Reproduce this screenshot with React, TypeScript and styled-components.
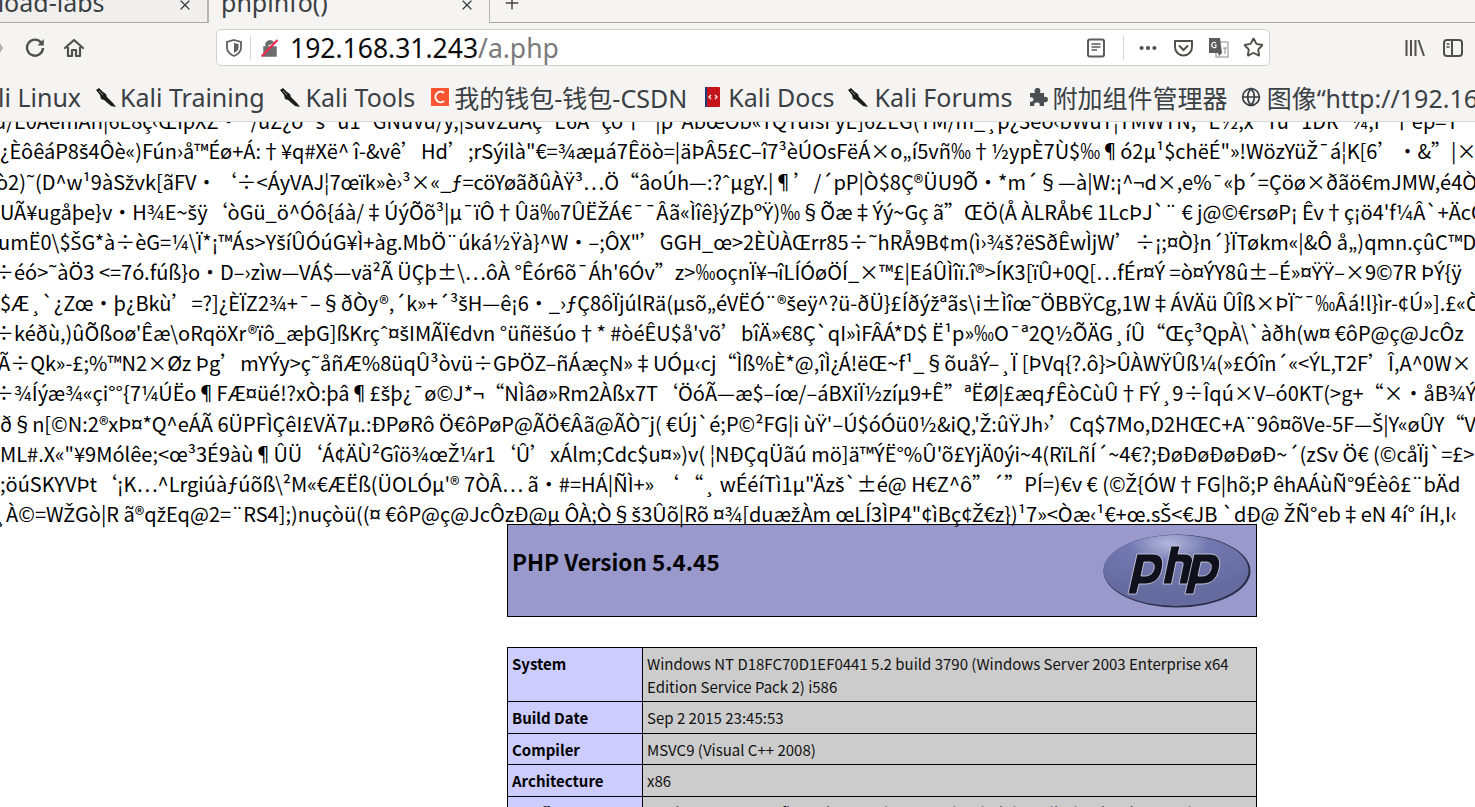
import React from 'react'
import styled, { createGlobalStyle } from 'styled-components'
import { X, Plus, MoreHorizontal, Star, Globe } from 'lucide-react'

const cjk = `"Noto Sans CJK SC", "Noto Sans", sans-serif`
const ui = `"Noto Sans", "Noto Sans CJK SC", sans-serif`

const GlobalStyle = createGlobalStyle`
  html, body {
    margin: 0;
    padding: 0;
    height: 100%;
    overflow: hidden;
    background: #fff;
    font-family: ${cjk};
  }
`

const Page = styled.div`
  width: 1475px;
  height: 807px;
  display: flex;
  flex-direction: column;
  overflow: hidden;
`

const TabBar = styled.div`
  height: 22px;
  display: flex;
  background: #f5f4f2;
  border-bottom: 1px solid #a8a8a4;
  flex: none;
  font-family: ${ui};
`

const Tab = styled.div<{ $w: number; $active?: boolean }>`
  width: ${(p) => p.$w}px;
  height: ${(p) => (p.$active ? 23 : 22)}px;
  flex: none;
  display: flex;
  justify-content: space-between;
  align-items: flex-start;
  overflow: hidden;
  box-sizing: border-box;
  padding: 0 14px 0 12px;
  font-size: 25px;
  color: #3a3f44;
  background: ${(p) => (p.$active ? '#f5f4f2' : '#f0efed')};
  border-right: 1px solid #b4b4b0;
  border-left: ${(p) => (p.$active ? '1px solid #b4b4b0' : 'none')};
  span {
    white-space: nowrap;
    line-height: 30px;
    margin-top: -13px;
  }
  svg {
    margin-top: -3px;
    flex: none;
  }
`

const FirstTab = styled(Tab)`
  padding-left: 0;
  span {
    margin-left: -36px;
  }
`

const NewTab = styled.div`
  padding: 0 0 0 12px;
  color: #444;
  margin-top: -7px;
`

const Toolbar = styled.div`
  height: 53px;
  flex: none;
  box-sizing: border-box;
  background: #f5f4f2;
  display: flex;
  align-items: center;
  padding: 0 12px 4px 0;
  color: #4f4f4d;
`

const BackStub = styled.div`
  width: 0;
  height: 0;
  flex: none;
  margin-right: 22px;
  border-top: 5px solid transparent;
  border-bottom: 5px solid transparent;
  border-left: 3px solid #b0b0ae;
`

const IconSlot = styled.div<{ $mr?: number; $ml?: number }>`
  display: flex;
  align-items: center;
  flex: none;
  margin-right: ${(p) => p.$mr ?? 0}px;
  margin-left: ${(p) => p.$ml ?? 0}px;
`

const UrlBar = styled.div`
  width: 1054px;
  margin-left: 132px;
  height: 37px;
  flex: none;
  box-sizing: border-box;
  background: #fff;
  border: 1px solid #d2d0cc;
  border-radius: 5px;
  display: flex;
  align-items: center;
  padding: 0 5px 0 9px;
  font-family: ${ui};
`

const UrlDivider = styled.div`
  width: 1px;
  height: 25px;
  background: #d8d8d6;
  flex: none;
`

const UrlText = styled.div`
  font-size: 26.5px;
  color: #0c0c0d;
  margin-left: 12px;
  flex: 1;
  white-space: nowrap;
  span {
    color: #7a7a7c;
  }
`

const UrlActions = styled.div`
  display: flex;
  align-items: center;
  gap: 14px;
  color: #4f4f4d;
`

const SideIcons = styled.div`
  margin-left: auto;
  display: flex;
  align-items: center;
  gap: 18px;
`

const BookmarkBar = styled.div`
  height: 45px;
  flex: none;
  box-sizing: border-box;
  background: #f5f4f2;
  display: flex;
  align-items: center;
  overflow: hidden;
  padding: 0 0 4px 96px;
  position: relative;
  font-family: ${ui};
`

const Bookmark = styled.div<{ $ml?: number; $gap?: number }>`
  display: flex;
  align-items: center;
  flex: none;
  gap: ${(p) => p.$gap ?? 5}px;
  margin-left: ${(p) => p.$ml ?? 15}px;
  font-size: 25px;
  color: #3a3f44;
  white-space: nowrap;
`

const FirstBookmark = styled(Bookmark)`
  position: absolute;
  left: -2px;
  margin-left: 0;
`

const Content = styled.div`
  flex: 1;
  overflow: hidden;
  background: #fff;
  color: #000;
  border-top: 1px solid #d8d8d6;
`

const GarbleBlock = styled.div`
  height: 418px;
  margin-top: -16px;
  font-size: 20px;
  line-height: 30.25px;
  white-space: nowrap;
`

const GarbleLine = styled.div<{ $shift: number }>`
  height: 30.25px;
  margin-left: ${(p) => p.$shift}px;
`

const Caron = styled.span`
  font-family: "Noto Sans", sans-serif;
`

const InfoColumn = styled.div`
  width: 750px;
  margin: 0 0 0 507px;
`

const Header = styled.div`
  height: 93px;
  box-sizing: border-box;
  border: 1px solid #000;
  background: #9999cc;
  display: flex;
  justify-content: space-between;
  align-items: center;
  padding: 0 5px 0 4px;
`

const HeaderTitle = styled.h1`
  margin: -18px 0 0;
  font-size: 22.5px;
  line-height: 35px;
  font-weight: 700;
`

const Table = styled.div`
  margin-top: 30px;
  border: 1px solid #000;
  border-bottom: none;
  font-size: 15px;
  line-height: 22.6px;
`

const Row = styled.div`
  display: grid;
  grid-template-columns: 135px 1fr;
  border-bottom: 1px solid #000;
`

const Key = styled.div`
  background: #ccccff;
  font-weight: 700;
  padding: 5px 4px 3px;
  border-right: 1px solid #000;
`

const Value = styled.div`
  background: #cccccc;
  padding: 5px 4px 3px;
  color: #111;
`

const KaliIcon = () => (
  <svg width="21" height="22" viewBox="2 0 21 22">
    <path d="M2 4 L5 2 L9 6 L12 8 L13 11 L19 17 L22 21 L17 20 L10 14 L7 13 L6 9 Z" fill="#1d1d1d" />
    <path d="M5 5 L9 9" stroke="#999" strokeWidth="1" />
  </svg>
)

const CsdnIcon = () => (
  <svg width="20" height="20" viewBox="0 0 20 20">
    <rect x="1" y="1" width="18" height="18" fill="#fc5531" />
    <path d="M14 6 A5.2 5.2 0 1 0 14 14" fill="none" stroke="#fff" strokeWidth="2" />
  </svg>
)

const DocsIcon = () => (
  <svg width="20" height="22" viewBox="0 0 20 22">
    <rect x="3" y="1" width="15" height="20" rx="1" fill="#c4141c" />
    <rect x="3" y="1" width="2" height="20" fill="#1e3a78" />
    <path d="M9 9 L7 11 L9 13 M13 9 L15 11 L13 13" fill="none" stroke="#fff" strokeWidth="1.2" />
  </svg>
)

const PuzzleIcon = () => (
  <svg width="20" height="20" viewBox="0 0 20 20">
    <path
      d="M2 6 H7 C6 3 7 1 9.5 1 C12 1 13 3 12 6 H16 V10 C18.5 9 20 10.5 20 12.5 C20 14.5 18.5 16 16 15 V19 H11.5 C12.5 16.5 11 15.5 9 15.5 C7 15.5 5.5 16.5 6.5 19 H2 V14.5 C4 15.5 5.5 14 5.5 12.5 C5.5 11 4 9.5 2 10.5 Z"
      fill="#4a4f52"
    />
  </svg>
)

const ReloadIcon = () => (
  <svg width="20" height="20" viewBox="0 0 20 20" fill="none" stroke="#4f4f4d" strokeWidth="2.4">
    <path d="M16.5 5 A8 8 0 1 0 18 10" />
    <path d="M18.8 1 V7.5 H12.5 Z" fill="#4f4f4d" stroke="none" />
  </svg>
)

const HomeIcon = () => (
  <svg width="20" height="20" viewBox="0 0 20 20" fill="none" stroke="#4f4f4d" strokeWidth="2.2" strokeLinejoin="round">
    <path d="M1 10 L10 2 L19 10" strokeLinecap="round" />
    <path d="M4 9 V18 H8 V12 H12 V18 H16 V9" />
  </svg>
)

const ShieldIcon = () => (
  <svg width="16" height="18" viewBox="0 0 16 18">
    <path d="M8 1 L15 3 V9 C15 13 11 16 8 17 C5 16 1 13 1 9 V3 Z" fill="none" stroke="#5f5f5f" strokeWidth="1.8" />
    <path d="M8 4 L12.5 5 V9 C12.5 11 10 13 8 14 Z" fill="#5f5f5f" />
  </svg>
)

const InsecureLock = () => (
  <svg width="17" height="18" viewBox="0 0 17 18">
    <path d="M5 8 V5.5 a4 4 0 0 1 7.5 -1.5 M3 8 H15 V17 H3 Z" fill="#6d6d6d" stroke="#6d6d6d" strokeWidth="1.5" />
    <path d="M0.5 17.5 L16.5 1" stroke="#ee2850" strokeWidth="2.2" />
  </svg>
)

const ReaderIcon = () => (
  <svg width="20" height="20" viewBox="0 0 20 20" fill="none" stroke="#5a5a5a">
    <rect x="2" y="1.5" width="16" height="17" rx="2" strokeWidth="2" />
    <path d="M5.5 6 H14.5 M5.5 9 H14.5 M5.5 12 H11" strokeWidth="1.3" />
  </svg>
)

const PocketIcon = () => (
  <svg width="21" height="20" viewBox="0 0 21 20" fill="none" stroke="#4f4f4d" strokeWidth="2">
    <path d="M2 3 H19 V9 A8.5 8.5 0 0 1 2 9 Z" strokeLinejoin="round" />
    <path d="M6.5 8 L10.5 12 L14.5 8" strokeLinecap="round" />
  </svg>
)

const TranslateIcon = () => (
  <svg width="21" height="21" viewBox="0 0 21 21">
    <rect x="8" y="5" width="12" height="15" fill="#fff" stroke="#8a8a8a" />
    <path d="M1 1 H12 L14 16 L11 19 L10 16 H1 Z" fill="#5c5c5c" />
    <path d="M8 6 A2.6 2.6 0 1 0 8 10 V8 H6.5" fill="none" stroke="#fff" strokeWidth="1.1" />
    <path d="M15 11 H19 M17 11 V17" stroke="#8a8a8a" />
  </svg>
)

const LibraryIcon = () => (
  <svg width="20" height="20" viewBox="0 0 20 20" fill="none" stroke="#4f4f4d" strokeWidth="2">
    <path d="M1.5 2 V18 M6 2 V18 M10.5 2 V18 M13.5 2 L19 18" />
  </svg>
)

const SidebarIcon = () => (
  <svg width="20" height="20" viewBox="0 0 20 20" fill="none" stroke="#4f4f4d" strokeWidth="2">
    <rect x="1" y="2" width="18" height="16" rx="3" />
    <path d="M9 2 V18" />
    <path d="M3.5 6 H6.5 M3.5 9 H6.5" strokeWidth="1.3" />
  </svg>
)

const PhpLogo = () => (
  <svg width="148" height="74" viewBox="0 0 148 74">
    <defs>
      <radialGradient id="php-oval" cx="45%" cy="12%" r="70%">
        <stop offset="0%" stopColor="#b4b8dc" />
        <stop offset="40%" stopColor="#7278b0" />
        <stop offset="100%" stopColor="#666b9f" />
      </radialGradient>
    </defs>
    <ellipse cx="74" cy="37" rx="73.5" ry="36.5" fill="#2b2d48" />
    <ellipse cx="73" cy="36.4" rx="72.5" ry="35.6" fill="url(#php-oval)" />
    <g fill="#11111e" stroke="#d8d9ea" strokeWidth="0.8">
      <path fillRule="evenodd" d="M25 60 L34 20 H50 C59 20 61 27 59 35 C57 46 50 50 42 50 H36 L33.5 60 Z M41 28 L38 42 H42 C47 42 50 39 51 35 C52 30 50 28 46 28 Z" />
      <path d="M60 50 L68 12 H77 L75 20 H81 C88 20 91 24 89 31 L85 50 H76 L80 31 C80.5 29 80 28 78 28 H73 L68.5 50 Z" />
      <path fillRule="evenodd" d="M82 60 L91 20 H107 C116 20 118 27 116 35 C114 46 107 50 99 50 H93 L90.5 60 Z M98 28 L95 42 H99 C104 42 107 39 108 35 C109 30 107 28 103 28 Z" />
    </g>
  </svg>
)

const garble: [number, string][] = [
  [-6, 'u/E0AemAn|6E8ç‹ŒîpXZ•´/uZ¿ô¨š¯ú1´GNúVú/y,|šuvZúAç¯E6A¯ço†¯|pˆAbœOb«TQTúîsFyE]6ZEG(TM/m_¸p¿3eô‹bWúT¦TMWTN,¯E½,x¯Tú¯1DR¯¼,I¯†ep=T'],
  [0, '¿ÈôêáP8š4Ôè«)Fún›å™Éø+Á:†¥q#Xë^ î-&vê’Hd’;rSýilà"€=¾æµá7Êöò=|äÞÂ5£C–î7³èÚOsFëÁ×o„í5vñ‰†½ypÈ7Ù$‰¶ó2µ¹$chëÉ"»!WözYüŽ¯á¦K[6’•&”|×"'],
  [-4, 'ò2)˜(D^w¹9àSžvk[ãFV•‘÷<ÁyVAJ¦7œïk»è›³×«_ƒ=cöYøãðûÀŸ³…Ö“âoÚh—:?ˆµgY.|¶’/´pP|Ò$8Ç®ÜU9Õ•*m´§—à|W:¡^¬d×,e%¯«þ´=Çöø×ðãö€mJMW,é4Ò'],
  [0, 'UÃ¥ugåþe}v•H¾E~šÿ‘òGü_ö^Óô{áà/‡ÚýÕõ³|µ¯ïÔ†Ûä‰7ÛËŽÁ€¯¯Âã«Ìîê}ýZþºŸ)‰§Õæ‡Ýý~Gç ã”ŒÖ(Å ÀLRÅb€ 1LcÞJ`¨ € j@©€rsøP¡ Êv†ç¡ö4\'f¼Â`+ÄcÖ'],
  [-2, 'umË0\\$ŠG*à÷èG=¼\\Ï*¡™Ás>YšíÛÓúG¥Ì+àg.MbÖ¨úká½Ÿà}^W•–;ÔX"’GGH_œ>2ÈÙÀŒrr85÷˜hRÅ9B¢m(ì›¾š?ëSðÊwÌjW’÷¡;¤Ò}n´}ÏTøkm«|&Ô å„)qmn.çûC™D'],
  [-6, '÷éó>˜àÖ3 <=7ó.fúß}o•D–›zìw—VÁ$—vä²Ã ÜÇþ±\\…ôÀ °Êór6õ¯Áh\'6Óv”z>‰oçnÏ¥¬îLÍÓøÖÍ_×™£|EáÛÌîï.î®>ÍK3[ïÛ+0Q[…fÉr¤Ý =ò¤ÝY8û±–É»¤ŸŸ–×9©7R ÞÝ{ÿ'],
  [0, '$Æ¸`¿Zœ•þ¿Bkù’=?]¿ÈÏZ2¾+¯–§ðÒy®,´k»+´³šH—ê¡6•_›ƒÇ8ôÏjúlRä(µsõ„éVËÓ¨®šeÿ^?ü-ðÜ}£Íðýžªãs\\i±Ìîœ˜ÖBBŸCg,1W‡ÁVÄü ÛÎß×ÞÏ˜¯‰Âá!l}ìr-¢Ú»].£«Ò'],
  [-6, '÷kéðù,)ûÕßoø\'Êæ\\oRqöXr®ïô_æþG]ßKrçˆ¤šIMÃÏ€dvn °üñëšúo†* #òéÊU$å\'võ’bîÄ»€8Ç`qI»ìFÂÁ*D$ Ë¹p»‰O¯ª2Q½ÕÄG¸íÛ“Œç³QpÀ\\`àðh(w¤ €ôP@ç@JcÔz'],
  [-2, 'Ã÷Qk»-£;%™N2×Øz Þg’mYÝy>ç˜åñÆ%8üqÛ³òvü÷GÞÖZ–ñÁæçN»‡UÓµ‹cj“Ìß%È*@,îÌ¿Á!ëŒ~f¹_§õuåÝ–¸Ï [ÞVq{?.ô}>ÛÀWŸÛß¼(»£Óîn´«<ÝL,T2F’Î,A^0W×'],
  [-6, '÷¾Íýæ¾«çi°°{7¼ÚËo¶FÆ¤üé!?xÒ:þâ¶£šþ¿¯ø©J*¬“NÌâø»Rm2Àßx7T‘ÖóÃ—æ$–íœ/–áBXiÏ½zíµ9+Ê”ªËØ|£æqƒÊòCùÛ†FÝ¸9÷Îqú×V–ó0KT(>g+“×•åB¾ÝÁ'],
  [0, 'ð§n[©N:2®xÞ¤*Q^eÁÃ 6ÜPFÌÇêI£VÄ7µ.:ÐPøRô Ö€ôPøP@ÃÖ€Âã@ÃÒ˜j( €Új`é;P©²FG|i ùŸ\'–Ú$óÓü0½&iQ,\'Ž:ûŸJh›’Cq$7Mo,D2HŒC+A¨9ô¤õVe-5F—Š|Y«øÛY“V'],
  [0, 'ML#.X«"¥9Mólêe;<œ³3É9àù¶ÛÜ‘Á¢ÄÙ²Gîö¾œŽ¼r1‘Û’xÁlm;Cdc$u¤»)v( ¦NÐÇqÜãú mö]ä™ÝË°%Û\'õ£YjÄ0ýi~4(RïLñÍ´~4€?;ÐøÐøÐøÐøÐ~´(zSv Ö€ (©cåÏj`=£>'],
  [0, ';öúSKYVÞt‘¡K…^Lrgiúàƒúõß\\²M«€ÆËß(ÜOLÓµ\'® 7ÒÂ… ã•#=HÁ|ÑÌ+» ‘ “¸ wÉéíTì1µ"Äzš`±é@ H€Z^ô”´”PÍ=)€v € (©Ž{ÓW†FG|hõ;P êhAÁùÑ°9Éèô£¨bÄd “'],
  [-6, '¸À©=WŽGò|R ã®qžEq@2=¨RS4];)nuçòü((¤ €ôP@ç@JcÔzÐ@µ ÔÀ;Ò§š3Ûõ|Rõ ¤¾[duæžÀm œLÍ3ÌP4"¢ìBç¢Ž€z})¹7»<Òæ‹¹€+œ.sŠ<€JB `dÐ@ ŽÑ°eb‡eN 4í° íH,I‹'],
]

// š ž come out with a shifted caron in the CJK font, so these few use Noto Sans
const withCarons = (text: string) =>
  text.split(/([šžŠŽ])/).map((part, i) => (i % 2 ? <Caron key={i}>{part}</Caron> : part))

const rows: [string, string][] = [
  ['System', 'Windows NT D18FC70D1EF0441 5.2 build 3790 (Windows Server 2003 Enterprise x64 Edition Service Pack 2) i586'],
  ['Build Date', 'Sep 2 2015 23:45:53'],
  ['Compiler', 'MSVC9 (Visual C++ 2008)'],
  ['Architecture', 'x86'],
  ['Configure Command', 'cscript /nologo configure.js "--enable-snapshot-build" "--disable-isapi" "--enable-debug-pack"'],
]

const App: React.FC = () => (
  <Page>
    <GlobalStyle />
    <TabBar>
      <FirstTab $w={208}>
        <span>Upload-labs</span>
        <X size={16} strokeWidth={1.8} />
      </FirstTab>
      <Tab $w={282} $active>
        <span>phpinfo()</span>
        <X size={16} strokeWidth={1.8} />
      </Tab>
      <NewTab>
        <Plus size={20} strokeWidth={1.8} />
      </NewTab>
    </TabBar>
    <Toolbar>
      <BackStub />
      <IconSlot $mr={19}>
        <ReloadIcon />
      </IconSlot>
      <IconSlot>
        <HomeIcon />
      </IconSlot>
      <UrlBar>
        <IconSlot $mr={8}>
          <ShieldIcon />
        </IconSlot>
        <UrlDivider />
        <IconSlot $ml={10}>
          <InsecureLock />
        </IconSlot>
        <UrlText>
          192.168.31.243<span>/a.php</span>
        </UrlText>
        <UrlActions>
          <ReaderIcon />
          <IconSlot $ml={3} $mr={-1}>
            <UrlDivider />
          </IconSlot>
          <MoreHorizontal size={22} strokeWidth={2.6} />
          <PocketIcon />
          <TranslateIcon />
          <Star size={21} strokeWidth={2.2} />
        </UrlActions>
      </UrlBar>
      <SideIcons>
        <LibraryIcon />
        <SidebarIcon />
      </SideIcons>
    </Toolbar>
    <BookmarkBar>
      <FirstBookmark>
        <span>li Linux</span>
      </FirstBookmark>
      <Bookmark $ml={0} $gap={3}>
        <KaliIcon />
        Kali Training
      </Bookmark>
      <Bookmark>
        <KaliIcon />
        Kali Tools
      </Bookmark>
      <Bookmark $gap={4}>
        <CsdnIcon />
        我的钱包-钱包-CSDN
      </Bookmark>
      <Bookmark $gap={6}>
        <DocsIcon />
        Kali Docs
      </Bookmark>
      <Bookmark $ml={14}>
        <KaliIcon />
        Kali Forums
      </Bookmark>
      <Bookmark $gap={5}>
        <PuzzleIcon />
        附加组件管理器
      </Bookmark>
      <Bookmark $ml={13} $gap={6}>
        <Globe size={20} strokeWidth={2} />
        图像“http://192.168.31.243
      </Bookmark>
    </BookmarkBar>
    <Content>
      <GarbleBlock>
        {garble.map(([shift, text], i) => (
          <GarbleLine key={i} $shift={shift}>
            {withCarons(text)}
          </GarbleLine>
        ))}
      </GarbleBlock>
      <InfoColumn>
        <Header>
          <HeaderTitle>PHP Version 5.4.45</HeaderTitle>
          <PhpLogo />
        </Header>
        <Table>
          {rows.map(([k, v]) => (
            <Row key={k}>
              <Key>{k}</Key>
              <Value>{v}</Value>
            </Row>
          ))}
        </Table>
      </InfoColumn>
    </Content>
  </Page>
)

export default App
